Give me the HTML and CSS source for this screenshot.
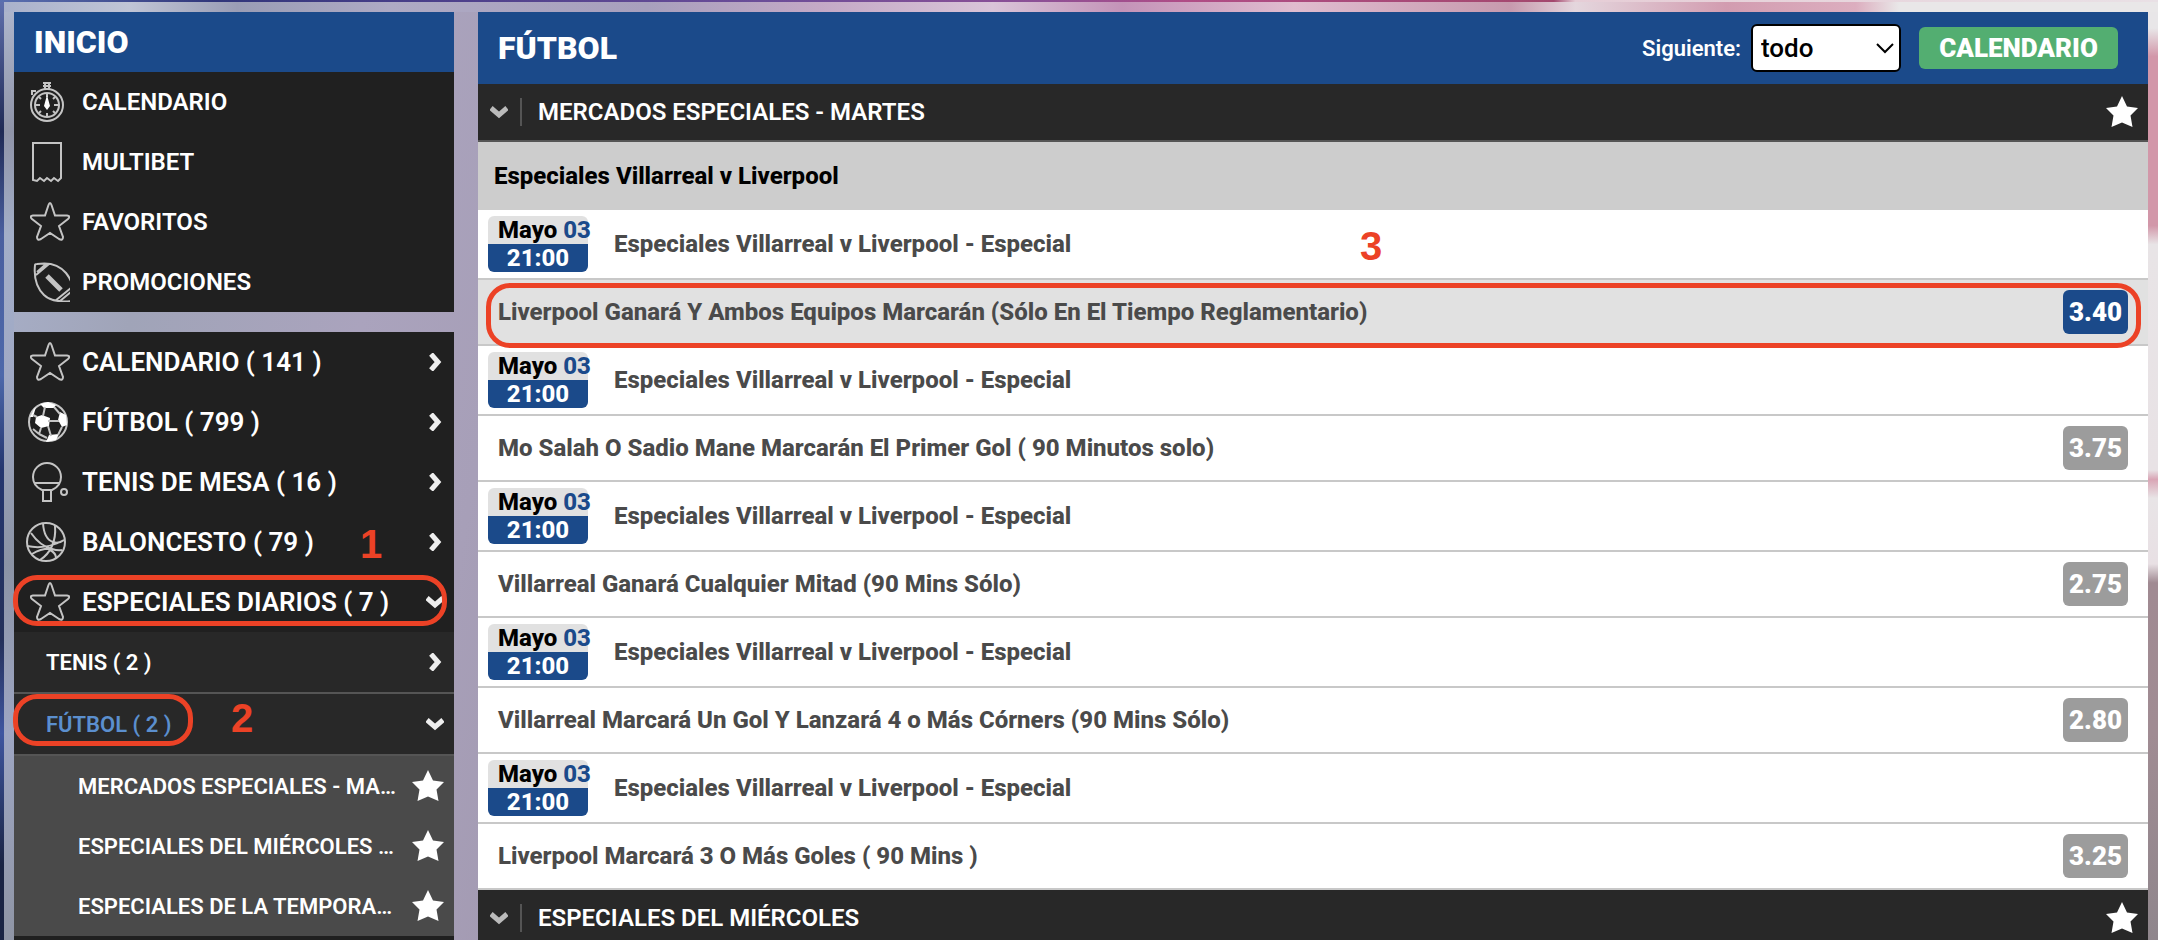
FILE: index.html
```html
<!DOCTYPE html>
<html lang="es">
<head>
    <meta charset="UTF-8">
    <meta name="viewport" content="width=device-width, initial-scale=1.0">
    <title>Fútbol - Mercados Especiales</title>
    <link rel="stylesheet" href="styles.css">
</head>
<body>
    <svg class="sprite" aria-hidden="true">
        <symbol id="star-line" viewBox="0 0 40 40">
            <path d="M18.500 3 Q20 -1 21.500 3 L25 13.500 H37 Q41 14 38 17 L29 24 L33 35 Q33 39 29 37 L20 31 L11 37 Q7 39 7 35 L11 24 L2 17 Q-1 14 3 13.500 H15 Z"/>
        </symbol>
        <symbol id="star" viewBox="0 0 32 32">
            <path d="M16 0 L21 10.500 L32 12 L24.500 19.500 L26.500 31 L16 26.500 L5.500 31 L7.500 19.500 L0 12 L11 10.500 Z"/>
        </symbol>
        <symbol id="right" viewBox="0 0 18 18">
            <path d="M5 1 L12 9 L5 17"/>
        </symbol>
        <symbol id="down" viewBox="0 0 18 18">
            <path d="M1 5 L9 12 L17 5"/>
        </symbol>
    </svg>

    <aside class="sidebar">
        <nav class="menu">
            <h2 class="menu-title">INICIO</h2>
            <a class="item" href="#">
                <svg class="icon" viewBox="0 0 40 40">
                    <circle cx="17" cy="23" r="16"/>
                    <circle cx="17" cy="23" r="12"/>
                    <path d="M13 1 H21 M13 4 H21 M15 1 V7 M19 1 V7 M2 13 V9 H6 M17 12 V15 M17 31 V35 M6 23 H10 M24 23 H28 M9 15 L11 17 M25 15 L23 17 M9 31 L11 29 M25 31 L23 29"/>
                    <path class="fill" d="M17 13 L20 24 L17 28 L14 24 Z"/>
                </svg>
                CALENDARIO
            </a>
            <a class="item" href="#">
                <svg class="icon" viewBox="0 0 40 40">
                    <path d="M3 1 H31 V36 L28 39 L24 36 L21 39 L17 36 L14 39 L10 36 L7 39 L3 38 Z"/>
                </svg>
                MULTIBET
            </a>
            <a class="item" href="#">
                <svg class="icon"><use href="#star-line"/></svg>
                FAVORITOS
            </a>
            <a class="item" href="#">
                <svg class="icon clip" viewBox="0 0 40 40">
                    <path d="M5 3 Q5 2 7 2 Q26 -1 36 11 Q40 16 42 22 M5 3 Q3 22 14 33 Q22 41 42 39 M6 13 L19 2 M7 10 L16 2 M25 39 L41 26 M30 39 L41 30"/>
                    <path class="thick" d="M17 14 L31 28"/>
                </svg>
                PROMOCIONES
            </a>
        </nav>

        <nav class="menu sports">
            <a class="item" href="#">
                <svg class="icon"><use href="#star-line"/></svg>
                CALENDARIO ( 141 )
                <svg class="arrow"><use href="#right"/></svg>
            </a>
            <a class="item" href="#">
                <svg class="icon" viewBox="0 0 40 40">
                    <circle cx="18" cy="20" r="19"/>
                    <path class="fill" d="M12 13 L20 16 L19 24 L11 26 L5 21 L6 15 Z M30 10 L36 13 L37 23 L32 25 L28 18 Z M10 2 L18 0 L26 3 L24 6 L14 6 Z M19 33 L29 32 L26 38 L16 40 Z M0 15 L4 7 L6 5 L3 15 Z"/>
                    <path d="M18 19 H29 M13 14 L15 5 M24 5 L30 12 M7 15 L3 13 M11 26 L9 32 M18 24 L21 34 M32 25 L28 33 M9 32 L17 36 M9 32 L3 27"/>
                </svg>
                FÚTBOL ( 799 )
                <svg class="arrow"><use href="#right"/></svg>
            </a>
            <a class="item" href="#">
                <svg class="icon" viewBox="0 0 40 40">
                    <path d="M12 28 Q3 24 3 15 A14 14 0 1 1 31 15 Q31 24 22 28 Z M4 21 H30 M13 28 V39 H21 V28"/>
                    <circle cx="34" cy="30" r="3"/>
                </svg>
                TENIS DE MESA ( 16 )
                <svg class="arrow"><use href="#right"/></svg>
            </a>
            <a class="item" href="#">
                <svg class="icon" viewBox="0 0 40 40">
                    <circle cx="16" cy="20" r="19"/>
                    <path d="M13 1 Q14 17 23 20 Q29 22 34 18 M25 4 Q26 15 22 24 Q18 33 10 38 M1 11 Q10 24 22 27 Q28 29 32 28 M-3 24 Q16 28 34 18 M2 32 Q12 26 22 27 M20 28 Q26 31 26 36"/>
                </svg>
                BALONCESTO ( 79 )
                <svg class="arrow"><use href="#right"/></svg>
                <span class="step step-one">1</span>
            </a>
            <a class="item" href="#">
                <svg class="icon"><use href="#star-line"/></svg>
                ESPECIALES DIARIOS ( 7 )
                <svg class="arrow"><use href="#down"/></svg>
                <span class="ring ring-wide"></span>
            </a>
            <a class="item sub" href="#">
                TENIS ( 2 )
                <svg class="arrow"><use href="#right"/></svg>
            </a>
            <a class="item sub active" href="#">
                FÚTBOL ( 2 )
                <svg class="arrow"><use href="#down"/></svg>
                <span class="ring ring-short"></span>
                <span class="step step-two">2</span>
            </a>
            <a class="item league" href="#">
                <span class="league-name">MERCADOS ESPECIALES - MARTES</span>
                <svg class="star"><use href="#star"/></svg>
            </a>
            <a class="item league" href="#">
                <span class="league-name">ESPECIALES DEL MIÉRCOLES FÚTBOL</span>
                <svg class="star"><use href="#star"/></svg>
            </a>
            <a class="item league" href="#">
                <span class="league-name">ESPECIALES DE LA TEMPORADA</span>
                <svg class="star"><use href="#star"/></svg>
            </a>
        </nav>
    </aside>

    <main class="content">
        <header class="top">
            <h1>FÚTBOL</h1>
            <label for="next">Siguiente:</label>
            <div class="select-box">
                <select id="next">
                    <option>todo</option>
                </select>
                <svg class="caret" viewBox="0 0 18 18"><path d="M1 5 L9 13 L17 5"/></svg>
            </div>
            <button class="calendar">CALENDARIO</button>
        </header>

        <section>
            <h2 class="group">
                <svg class="fold"><use href="#down"/></svg>
                <span class="group-name">MERCADOS ESPECIALES - MARTES</span>
                <svg class="star"><use href="#star"/></svg>
            </h2>
            <h3 class="match">Especiales Villarreal v Liverpool</h3>

            <div class="row event">
                <div class="date"><span class="day">Mayo <b>03</b></span><span class="hour">21:00</span></div>
                Especiales Villarreal v Liverpool - Especial
                <span class="step step-three">3</span>
            </div>
            <div class="row bet selected">
                Liverpool Ganará Y Ambos Equipos Marcarán (Sólo En El Tiempo Reglamentario)
                <button class="odds">3.40</button>
                <span class="ring ring-row"></span>
            </div>

            <div class="row event">
                <div class="date"><span class="day">Mayo <b>03</b></span><span class="hour">21:00</span></div>
                Especiales Villarreal v Liverpool - Especial
            </div>
            <div class="row bet">
                Mo Salah O Sadio Mane Marcarán El Primer Gol ( 90 Minutos solo)
                <button class="odds">3.75</button>
            </div>

            <div class="row event">
                <div class="date"><span class="day">Mayo <b>03</b></span><span class="hour">21:00</span></div>
                Especiales Villarreal v Liverpool - Especial
            </div>
            <div class="row bet">
                Villarreal Ganará Cualquier Mitad (90 Mins Sólo)
                <button class="odds">2.75</button>
            </div>

            <div class="row event">
                <div class="date"><span class="day">Mayo <b>03</b></span><span class="hour">21:00</span></div>
                Especiales Villarreal v Liverpool - Especial
            </div>
            <div class="row bet">
                Villarreal Marcará Un Gol Y Lanzará 4 o Más Córners (90 Mins Sólo)
                <button class="odds">2.80</button>
            </div>

            <div class="row event">
                <div class="date"><span class="day">Mayo <b>03</b></span><span class="hour">21:00</span></div>
                Especiales Villarreal v Liverpool - Especial
            </div>
            <div class="row bet">
                Liverpool Marcará 3 O Más Goles ( 90 Mins )
                <button class="odds">3.25</button>
            </div>
        </section>

        <section>
            <h2 class="group">
                <svg class="fold"><use href="#down"/></svg>
                <span class="group-name">ESPECIALES DEL MIÉRCOLES</span>
                <svg class="star"><use href="#star"/></svg>
            </h2>
        </section>
    </main>
</body>
</html>
```

FILE: styles.css
```css
* {
    box-sizing: border-box;
}

/* backdrop: top edge, left edge, top strip, right strip, left strip, gutter */
body {
    display: flex;
    align-items: flex-start;
    gap: 24px;
    height: 100vh;
    margin: 0;
    padding: 12px 10px 0 14px;
    overflow: hidden;
    font-family: Roboto, "Liberation Sans", sans-serif;
    font-size: 24px;
    background:
        linear-gradient(to right, #5a70b0, #31367a 10%, #4a3f8a 20%, #6a4d98 35%, #8c5096 48%, #b04d86 55%, #a3486e 72%, #e6cdd6 73%, #e9e0e5) 0 0 / 100% 2px no-repeat,
        linear-gradient(#6070ae, #1f2a55 14%, #4a5f9f 25%, #4d68aa 40%, #24366f 50%, #24305a 68%, #3f56a0 78%, #1a2444 92%) 0 0 / 4px 100% no-repeat,
        linear-gradient(to right, #a9b1cb, #c0c5d6 6%, #9a9db5 11%, #aeaac4 18%, #a8a0bd 30%, #c4a9c6 38%, #d9c4d8 46%, #c493b8 52%, #e0bccf 60%, #c79aae 70%, #e4d6dd 73%, #d29cb0 80%, #dcaebf 86%, #e9e7e8 88%) 0 0 / 100% 12px no-repeat,
        linear-gradient(#e8e6e8 3%, #d297a9 6%, #d297a9 24%, #e8e4e6 26%, #e8e2e5 50%, #d9a5b5 51%, #e8e4e6 53%, #e8e0e4 60%, #a08a92 62%, #a08c93 78%, #8f868c) 100% 0 / 10px 100% no-repeat,
        linear-gradient(#b0b8cf, #8f94a8 14%, #a3aec8 25%, #a0a9c5 40%, #8b93a5 60%, #9ea6c3 78%, #8f95a5) 0 0 / 14px 100% no-repeat,
        linear-gradient(100deg, #a9b1cb 0, #a0a4b8 8%, #aaa3bd 18%, #a79fb8 24%, #a299b0 30%);
}

h1, h2, h3 {
    margin: 0;
}

a {
    color: inherit;
    text-decoration: none;
}

button, select {
    border: 0;
    font-family: inherit;
    cursor: pointer;
}

.sprite {
    position: absolute;
    width: 0;
    height: 0;
}

/* sidebar */
.sidebar {
    flex: none;
    width: 440px;
    color: #fff;
}

.menu {
    background: #202020;
}

.menu-title {
    height: 60px;
    padding-left: 20px;
    font-size: 32px;
    font-weight: 900;
    line-height: 60px;
    background: #1b4a8a;
}

.item {
    position: relative;
    display: flex;
    align-items: center;
    height: 60px;
    padding: 0 10px 0 12px;
    font-weight: 600;
    white-space: nowrap;
}

.icon {
    width: 40px;
    height: 40px;
    margin: 0 12px 0 4px;
    overflow: visible;
    fill: none;
    stroke: #c4c4c4;
    stroke-width: 2;
}

.icon.clip {
    overflow: hidden;
}

.icon .fill {
    fill: #fff;
    stroke: none;
}

.icon .thick {
    stroke-width: 5;
}

.sports {
    margin-top: 20px;
    padding-bottom: 20px;
    font-size: 26px;
}

.arrow, .fold {
    width: 18px;
    height: 18px;
    fill: none;
    stroke: #eee;
    stroke-width: 5;
}

.arrow {
    margin-left: auto;
}

.sub {
    height: 62px;
    padding-left: 32px;
    border-bottom: 2px solid #555;
    font-size: 22px;
    background: #282828;
}

.active {
    color: #5b8fce;
}

.league {
    gap: 16px;
    padding-left: 64px;
    font-size: 22px;
    background: #4a4a4a;
}

.league-name {
    flex: 1;
    overflow: hidden;
    text-overflow: ellipsis;
}

.star {
    flex: none;
    width: 32px;
    height: 32px;
    fill: #fff;
}

/* content */
.content {
    flex: 1;
    min-width: 0;
    background: #fff;
}

.top {
    display: flex;
    align-items: center;
    height: 72px;
    padding: 0 30px 0 20px;
    color: #fff;
    background: #1b4a8a;
}

.top h1 {
    margin-right: auto;
    font-size: 32px;
    font-weight: 900;
}

.top label {
    margin-right: 10px;
    font-size: 22px;
    font-weight: 600;
}

.select-box {
    position: relative;
    margin-right: 18px;
}

.select-box select {
    width: 150px;
    height: 48px;
    padding: 0 8px;
    border: 2px solid #000;
    border-radius: 6px;
    font-size: 26px;
    font-weight: 500;
    color: #000;
    background: #fff;
    appearance: none;
}

.caret {
    position: absolute;
    top: 15px;
    right: 7px;
    width: 18px;
    height: 18px;
    fill: none;
    stroke: #000;
    stroke-width: 2;
    pointer-events: none;
}

.calendar {
    width: 199px;
    height: 42px;
    border-radius: 6px;
    font-size: 26px;
    font-weight: 900;
    color: #fff;
    background: #53ae71;
}

.group {
    display: flex;
    align-items: center;
    height: 58px;
    padding: 0 10px 0 12px;
    border-bottom: 2px solid #555;
    font-size: 24px;
    font-weight: 600;
    color: #fff;
    background: #282828;
}

.fold {
    stroke: #bbb;
}

.group-name {
    flex: 1;
    margin-left: 12px;
    padding-left: 16px;
    border-left: 2px solid #555;
}

.match {
    height: 68px;
    padding-left: 16px;
    font-size: 24px;
    font-weight: 800;
    line-height: 68px;
    background: #cdcdcd;
}

.row {
    position: relative;
    display: flex;
    align-items: center;
    border-bottom: 2px solid #c8c8c8;
    font-weight: 800;
    color: #4a4a4a;
}

.event {
    gap: 26px;
    height: 70px;
    padding-left: 10px;
}

.bet {
    justify-content: space-between;
    height: 66px;
    padding: 0 20px;
}

.date {
    width: 100px;
    border-radius: 6px;
    line-height: 28px;
    color: #000;
    background: linear-gradient(#e1e1e1 50%, #1b4a8a 50%);
}

.day {
    display: block;
    padding-left: 10px;
    white-space: nowrap;
}

.day b {
    font-weight: 800;
    color: #1b4a8a;
}

.hour {
    display: block;
    text-align: center;
    color: #fff;
}

.odds {
    width: 65px;
    height: 44px;
    padding: 0;
    border-radius: 6px;
    font-size: 26px;
    font-weight: 900;
    color: #fff;
    background: #9c9c9c;
}

.selected {
    background: #e1e1e1;
}

.selected .odds {
    background: #1b4a8a;
}

/* guide marks drawn over the page */
.ring {
    position: absolute;
    z-index: 1;
    border: 5px solid #ec4226;
    border-radius: 24px;
    pointer-events: none;
}

.ring-wide {
    top: 3px;
    right: 7px;
    bottom: 6px;
    left: -1px;
}

.ring-short {
    top: 0;
    bottom: 8px;
    left: -1px;
    width: 180px;
}

.ring-row {
    top: 3px;
    right: 7px;
    bottom: -4px;
    left: 8px;
}

.step {
    position: absolute;
    font-family: "Liberation Sans", Arial, sans-serif;
    font-size: 40px;
    font-weight: 700;
    line-height: 40px;
    color: #ec4226;
}

.step-one {
    top: 12px;
    left: 346px;
}

.step-two {
    top: 4px;
    left: 217px;
}

.step-three {
    top: 16px;
    left: 882px;
}
```
